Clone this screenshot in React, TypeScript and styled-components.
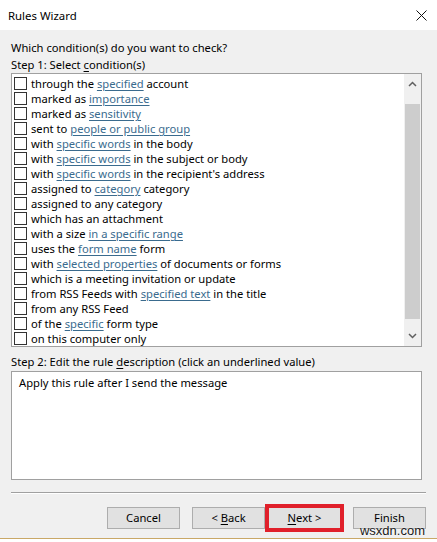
import styled, { createGlobalStyle } from "styled-components";

type Part = { text: string; link?: boolean };

const conditions: Part[][] = [
  [{ text: "through the " }, { text: "specified", link: true }, { text: " account" }],
  [{ text: "marked as " }, { text: "importance", link: true }],
  [{ text: "marked as " }, { text: "sensitivity", link: true }],
  [{ text: "sent to " }, { text: "people or public group", link: true }],
  [{ text: "with " }, { text: "specific words", link: true }, { text: " in the body" }],
  [{ text: "with " }, { text: "specific words", link: true }, { text: " in the subject or body" }],
  [{ text: "with " }, { text: "specific words", link: true }, { text: " in the recipient's address" }],
  [{ text: "assigned to " }, { text: "category", link: true }, { text: " category" }],
  [{ text: "assigned to any category" }],
  [{ text: "which has an attachment" }],
  [{ text: "with a size " }, { text: "in a specific range", link: true }],
  [{ text: "uses the " }, { text: "form name", link: true }, { text: " form" }],
  [{ text: "with " }, { text: "selected properties", link: true }, { text: " of documents or forms" }],
  [{ text: "which is a meeting invitation or update" }],
  [{ text: "from RSS Feeds with " }, { text: "specified text", link: true }, { text: " in the title" }],
  [{ text: "from any RSS Feed" }],
  [{ text: "of the " }, { text: "specific", link: true }, { text: " form type" }],
  [{ text: "on this computer only" }],
];

export default function App() {
  return (
    <>
      <GlobalStyle />
      <Window>
        <TitleBar>
          <Title>Rules Wizard</Title>
          <svg width="11" height="11" viewBox="0 0 11 11">
            <path d="M0.5 0.5 L10.5 10.5 M10.5 0.5 L0.5 10.5" stroke="#111" strokeWidth="1" />
          </svg>
        </TitleBar>
        <Content>
          <Label>Which condition(s) do you want to check?</Label>
          <Label>
            Step 1: Select <u>c</u>ondition(s)
          </Label>
          <ListBox>
            <Rows>
              {conditions.map((parts, i) => (
                <Row key={i}>
                  <CheckBox />
                  <RowText>
                    {parts.map((p) => (p.link ? <Link>{p.text}</Link> : p.text))}
                  </RowText>
                </Row>
              ))}
            </Rows>
            <ScrollBar>
              <Arrow>
                <svg width="9" height="6" viewBox="0 0 9 6">
                  <path d="M1 5 L4.5 1.5 L8 5" stroke="#606060" strokeWidth="1.5" fill="none" />
                </svg>
              </Arrow>
              <Track>
                <Thumb />
              </Track>
              <Arrow>
                <svg width="9" height="6" viewBox="0 0 9 6">
                  <path d="M1 1 L4.5 4.5 L8 1" stroke="#606060" strokeWidth="1.5" fill="none" />
                </svg>
              </Arrow>
            </ScrollBar>
          </ListBox>
          <StepLabel>
            Step 2: Edit the rule <u>d</u>escription (click an underlined value)
          </StepLabel>
          <DescBox>Apply this rule after I send the message</DescBox>
          <Separator />
          <ButtonRow>
            <Button $gap={12}>Cancel</Button>
            <Button $gap={3}>
              &lt; <u>B</u>ack
            </Button>
            <Button $gap={12} $highlight>
              <u>N</u>ext &gt;
            </Button>
            <Button>Finish</Button>
          </ButtonRow>
        </Content>
        <Footer />
        <Watermark>wsxdn.com</Watermark>
      </Window>
    </>
  );
}

const GlobalStyle = createGlobalStyle`
  body {
    margin: 0;
    font-family: "Noto Sans", "Open Sans", sans-serif;
    font-size: 11.2px;
    color: #000;
  }
  u {
    text-decoration: underline;
    text-underline-offset: 2px;
  }
`;

const Window = styled.div`
  position: relative;
  width: 437px;
  height: 542px;
  background: #f0f0f0;
  display: flex;
  flex-direction: column;
  overflow: hidden;
`;

const TitleBar = styled.div`
  height: 30px;
  background: #fff;
  display: flex;
  align-items: center;
  justify-content: space-between;
  padding: 0 10px 0 8px;
  flex-shrink: 0;
`;

const Title = styled.div`
  font-size: 11.4px;
`;

const Content = styled.div`
  display: flex;
  flex-direction: column;
  padding: 9px 11px 0 11px;
`;

const Label = styled.div`
  line-height: 17px;
  height: 17px;
`;

const StepLabel = styled(Label)`
  margin-top: 6px;
`;

const ListBox = styled.div`
  width: 411px;
  height: 274px;
  box-sizing: border-box;
  border: 1px solid #a0a0a0;
  background: #fff;
  display: flex;
`;

const Rows = styled.div`
  flex: 1;
  padding: 2px 0 0 2px;
  display: flex;
  flex-direction: column;
`;

const Row = styled.div`
  height: 15px;
  display: flex;
  align-items: center;
  gap: 4px;
  white-space: pre;
`;

const RowText = styled.div`
  line-height: 15px;
`;

const CheckBox = styled.div`
  width: 13px;
  height: 13px;
  box-sizing: border-box;
  border: 1px solid #333;
  background: #fff;
  flex-shrink: 0;
`;

const Link = styled.span`
  color: #3a6b8e;
  text-decoration: underline;
  text-underline-offset: 2px;
`;

const ScrollBar = styled.div`
  width: 17px;
  background: #f0f0f0;
  display: flex;
  flex-direction: column;
`;

const Arrow = styled.div`
  height: 20px;
  display: flex;
  align-items: center;
  justify-content: center;
`;

const Track = styled.div`
  flex: 1;
  padding: 10px 1px 7px 1px;
  display: flex;
`;

const Thumb = styled.div`
  flex: 1;
  background: #cdcdcd;
`;

const DescBox = styled.div`
  margin-top: 1px;
  width: 411px;
  height: 109px;
  box-sizing: border-box;
  border: 1px solid #a0a0a0;
  background: #fff;
  padding: 2px 7px;
  line-height: 17px;
`;

const Separator = styled.div`
  margin-top: 12px;
  width: 415px;
  height: 1px;
  background: #a0a0a0;
  border-bottom: 1px solid #fff;
`;

const ButtonRow = styled.div`
  margin-top: 13px;
  display: flex;
  justify-content: flex-end;
`;

const Button = styled.div<{ $gap?: number; $highlight?: boolean }>`
  width: 73px;
  height: 22px;
  box-sizing: border-box;
  margin-right: ${({ $gap }) => $gap ?? 0}px;
  background: #e1e1e1;
  border: 1px solid #adadad;
  text-align: center;
  line-height: 20px;
  white-space: pre;
  outline: ${({ $highlight }) => ($highlight ? "4px solid #e0202b" : "none")};
  outline-offset: -1px;
`;

const Footer = styled.div`
  margin-top: auto;
  height: 3px;
  border-top: 1px solid #c9a867;
  background: #fff;
`;

const Watermark = styled.div`
  position: absolute;
  right: 12px;
  bottom: 4px;
  font-family: "Liberation Sans", Arial, sans-serif;
  font-size: 13px;
  color: #1a1a1a;
  text-shadow: 0 0 2px #fff;
`;
